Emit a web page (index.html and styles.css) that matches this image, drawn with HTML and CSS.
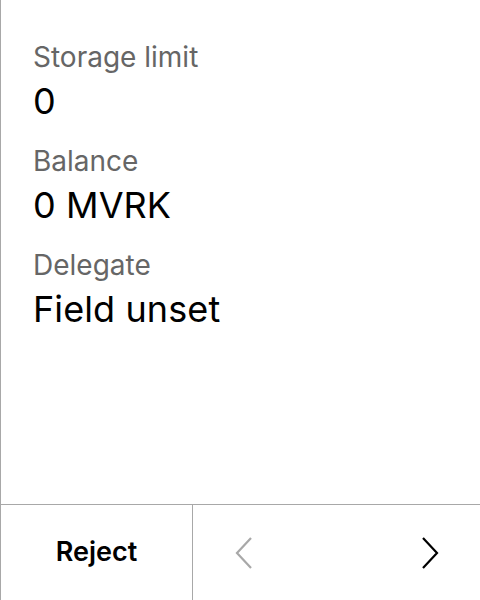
FILE: index.html
```html
<!DOCTYPE html>
<html>
<head>
<meta charset="utf-8">
<link rel="stylesheet" href="styles.css">
</head>
<body>
<div class="screen">
  <div class="content">
    <div class="field">
      <div class="label">Storage limit</div>
      <div class="value">0</div>
    </div>
    <div class="field">
      <div class="label">Balance</div>
      <div class="value">0 MVRK</div>
    </div>
    <div class="field">
      <div class="label">Delegate</div>
      <div class="value">Field unset</div>
    </div>
  </div>
  <div class="footer">
    <div class="reject">Reject</div>
    <div class="nav">
      <svg class="chev prev" width="20" height="34" viewBox="0 0 20 34"><polyline points="17,2 3,17 17,32" fill="none" stroke="#a8a8a8" stroke-width="2.2"/></svg>
      <svg class="chev next" width="20" height="34" viewBox="0 0 20 34"><polyline points="3,2 17,17 3,32" fill="none" stroke="#000" stroke-width="2.2"/></svg>
    </div>
  </div>
</div>
</body>
</html>
```
FILE: styles.css
```css
html, body {
  margin: 0;
  padding: 0;
  background: #fff;
}
.screen {
  width: 479px;
  height: 600px;
  border-left: 1px solid #a8a8a8;
  display: flex;
  flex-direction: column;
  font-family: Inter, "Noto Sans", sans-serif;
  color: #000;
}
.content {
  flex: 1;
  padding: 40px 0 0 32px;
  display: flex;
  flex-direction: column;
  gap: 21px;
}
.field {
  display: flex;
  flex-direction: column;
}
.label {
  font-size: 28px;
  line-height: 34px;
  color: #666;
}
.value {
  font-size: 36px;
  line-height: 44px;
  margin-top: 5px;
  letter-spacing: 0.1px;
}
.footer {
  height: 95px;
  border-top: 1px solid #a8a8a8;
  display: flex;
}
.reject {
  width: 191px;
  border-right: 1px solid #a8a8a8;
  display: flex;
  align-items: center;
  justify-content: center;
  font-size: 27px;
  font-weight: 600;
  padding-bottom: 2px;
}
.nav {
  flex: 1;
  display: flex;
  align-items: center;
  justify-content: space-between;
  padding: 0 40px 0 41px;
}
```
